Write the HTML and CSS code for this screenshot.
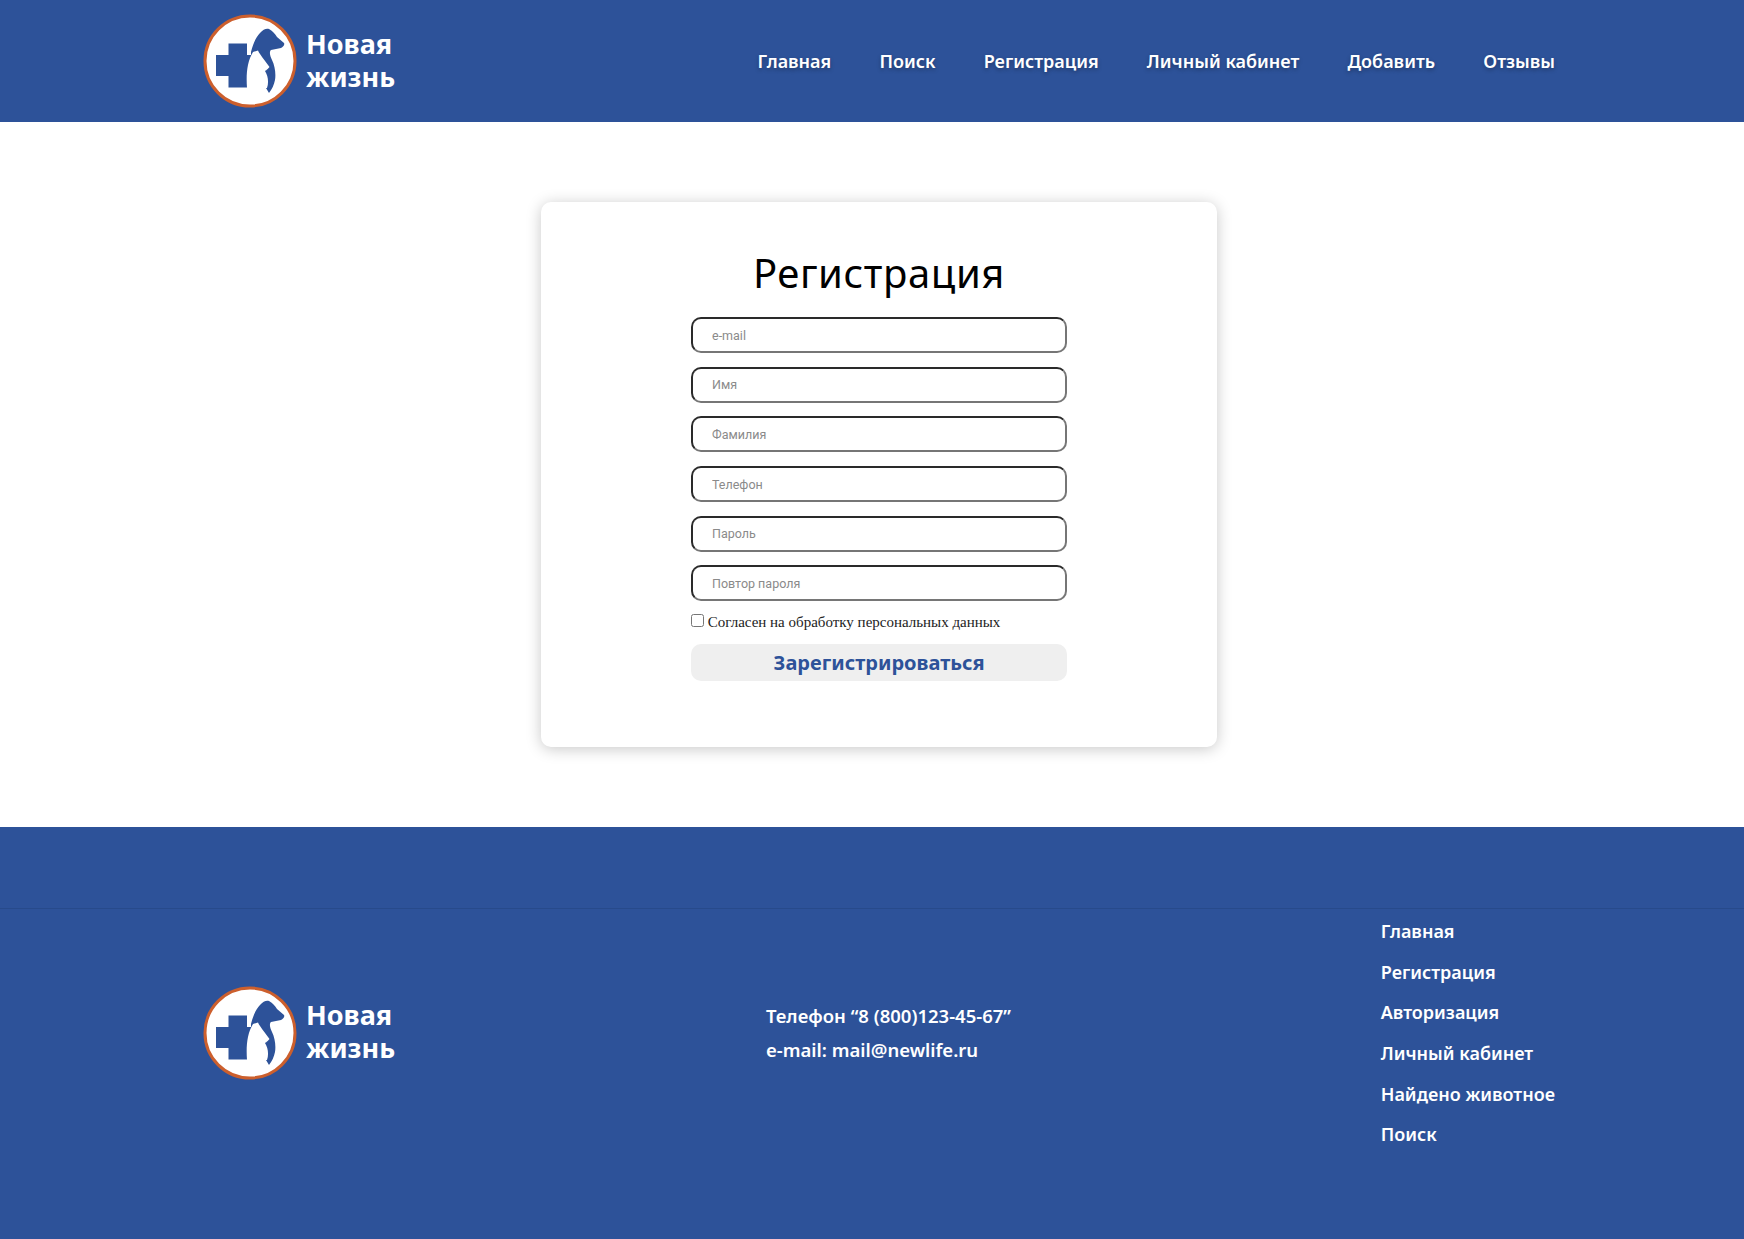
FILE: index.html
```html
<!DOCTYPE html>
<html lang="ru">
    <head>
        <meta charset="utf-8">
        <title>Новая жизнь: Регистрация</title>
        <link rel="stylesheet" href="styles.css">
    </head>
    <body>
        <header class="top">
            <a class="logo" href="#">
                <svg class="logo-icon" viewBox="0 0 94 94">
                    <circle cx="47" cy="47" r="45" fill="#fff" stroke="#cc5f2d" stroke-width="3"/>
                    <path d="M25.500 29.500H44V41H52V62H44V73.500H25.500V62H13V41H25.500Z" fill="#2d5299"/>
                    <path d="M48 38C50 30 53 23 57 19C60 15 64 14 66 15C70 17 72 20 74 23L81 29C82 31 80 33 78 34L68 36C66 38 67 42 69 46C72 52 73 60 72 66C71 71 69 75 66 79C64 76 62 72 60 68L48 50Z" fill="#2d5299"/>
                    <path d="M44 74C43 60 44 48 50 38L55 36.500C57 41 61 45 66.500 53C64 56 62 57 62 57C65 62 66 68 64 74Z" fill="#fff"/>
                </svg>
                <span class="logo-text">Новая<br>жизнь</span>
            </a>
            <nav class="menu">
                <a href="#">Главная</a>
                <a href="#">Поиск</a>
                <a href="#">Регистрация</a>
                <a href="#">Личный кабинет</a>
                <a href="#">Добавить</a>
                <a href="#">Отзывы</a>
            </nav>
        </header>

        <main class="content">
            <form class="card">
                <h1>Регистрация</h1>
                <input type="text" placeholder="e-mail">
                <input type="text" placeholder="Имя">
                <input type="text" placeholder="Фамилия">
                <input type="text" placeholder="Телефон">
                <input type="password" placeholder="Пароль">
                <input type="password" placeholder="Повтор пароля">
                <label class="agree"><input type="checkbox"> Согласен на обработку персональных данных</label>
                <button type="button">Зарегистрироваться</button>
            </form>
        </main>

        <footer class="bottom">
            <div class="bottom-row">
                <a class="logo" href="#">
                    <svg class="logo-icon" viewBox="0 0 94 94">
                        <circle cx="47" cy="47" r="45" fill="#fff" stroke="#cc5f2d" stroke-width="3"/>
                        <path d="M25.500 29.500H44V41H52V62H44V73.500H25.500V62H13V41H25.500Z" fill="#2d5299"/>
                        <path d="M48 38C50 30 53 23 57 19C60 15 64 14 66 15C70 17 72 20 74 23L81 29C82 31 80 33 78 34L68 36C66 38 67 42 69 46C72 52 73 60 72 66C71 71 69 75 66 79C64 76 62 72 60 68L48 50Z" fill="#2d5299"/>
                        <path d="M44 74C43 60 44 48 50 38L55 36.500C57 41 61 45 66.500 53C64 56 62 57 62 57C65 62 66 68 64 74Z" fill="#fff"/>
                    </svg>
                    <span class="logo-text">Новая<br>жизнь</span>
                </a>
                <div class="contacts">
                    <p>Телефон “8 (800)123-45-67”</p>
                    <p>e-mail: mail@newlife.ru</p>
                </div>
                <nav class="bottom-menu">
                    <a href="#">Главная</a>
                    <a href="#">Регистрация</a>
                    <a href="#">Авторизация</a>
                    <a href="#">Личный кабинет</a>
                    <a href="#">Найдено животное</a>
                    <a href="#">Поиск</a>
                </nav>
            </div>
        </footer>
    </body>
</html>
```

FILE: styles.css
```css
body {
    margin: 0;
    font-family: "Noto Sans", sans-serif;
    color: #000;
    background: #fff;
}

a {
    color: #fff;
    text-decoration: none;
}

/* shared logo */
.logo {
    display: flex;
    align-items: center;
    gap: 9px;
}

.logo-icon {
    width: 94px;
    height: 94px;
    flex: none;
}

.logo-text {
    font-size: 27px;
    font-weight: 700;
    line-height: 33px;
    padding-bottom: 3px;
}

/* header */
.top {
    height: 122px;
    box-sizing: border-box;
    padding: 0 189px 0 203px;
    display: flex;
    align-items: center;
    justify-content: space-between;
    background: #2d5299;
}

.menu {
    display: flex;
    gap: 48.2px;
}

.menu a {
    font-size: 18px;
    font-weight: 600;
    text-shadow: 0 2px 4px rgba(0,0,0,.3);
}

/* form */
.content {
    height: 705px;
    padding: 80px 0 0 14px;
    box-sizing: border-box;
}

.card {
    width: 676px;
    height: 545px;
    box-sizing: border-box;
    margin: 0 auto;
    padding: 45px 150px 0;
    display: flex;
    flex-direction: column;
    background: #fff;
    border-radius: 10px;
    box-shadow: 0 2px 15px rgba(0,0,0,.22);
}

.card h1 {
    margin: 0 0 18px;
    font-size: 40px;
    font-weight: 400;
    line-height: 52px;
    letter-spacing: .6px;
    text-align: center;
}

.card input[type=text],
.card input[type=password] {
    height: 36px;
    box-sizing: border-box;
    margin-bottom: 13.7px;
    padding: 0 19px;
    font-family: Roboto, sans-serif;
    font-size: 12.5px;
    border: 2px solid;
    border-color: #2a2a2a #767676 #767676 #2a2a2a;
    border-radius: 10px;
}

.card input::placeholder {
    color: #8a8a8a;
}

.agree {
    margin-top: -2px;
    font-family: "Liberation Serif", serif;
    font-size: 15px;
    line-height: 18px;
    color: #222;
}

.agree input {
    margin: 0;
    width: 13px;
    height: 13px;
}

.card button {
    height: 37px;
    margin-top: 13px;
    font-family: "Noto Sans", sans-serif;
    font-size: 20px;
    font-weight: 700;
    color: #2d5299;
    background: #efefef;
    border: 0;
    border-radius: 10px;
}

/* footer */
.bottom {
    height: 412px;
    box-sizing: border-box;
    padding-top: 81px;
    background: #2d5299;
}

.bottom-row {
    padding: 0 189px 0 203px;
    display: grid;
    grid-template-columns: 563px 1fr auto;
    align-items: center;
    border-top: 1px solid #274a8b;
}

.bottom-row .logo,
.contacts {
    padding-top: 10px;
}

.contacts p {
    margin: 0 0 14px;
    font-size: 18.5px;
    font-weight: 600;
    line-height: 20px;
    color: #fff;
}

.contacts p:last-child {
    margin-bottom: 0;
}

.bottom-menu {
    display: flex;
    flex-direction: column;
    gap: 16.7px;
    padding-top: 10px;
}

.bottom-menu a {
    font-size: 18px;
    font-weight: 600;
    line-height: 24px;
}
```
